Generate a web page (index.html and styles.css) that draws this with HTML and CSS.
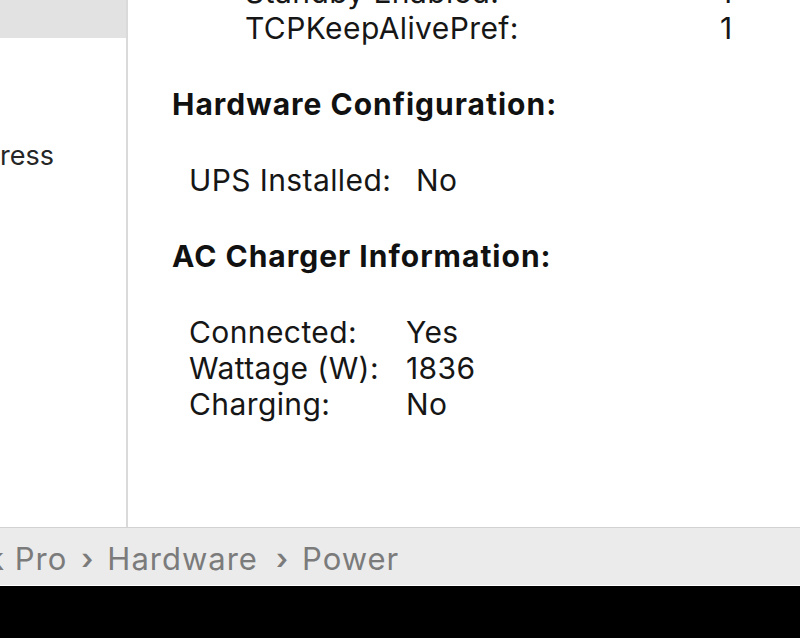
FILE: index.html
```html
<!DOCTYPE html>
<html>
<head>
<meta charset="utf-8">
<link rel="stylesheet" href="styles.css">
</head>
<body>
<div class="window">
  <div class="main">
    <aside class="sidebar">
      <div class="sidebar-selected"></div>
      <div class="sidebar-item">ress</div>
    </aside>
    <div class="divider"></div>
    <section class="content">
      <div class="inner">
        <div class="kv kv-deep">
          <span class="k">Standby Enabled:</span><span class="v">1</span>
          <span class="k">TCPKeepAlivePref:</span><span class="v">1</span>
        </div>
        <h2 class="heading">Hardware Configuration:</h2>
        <div class="kv kv-ups">
          <span class="k">UPS Installed:</span><span class="v">No</span>
        </div>
        <h2 class="heading">AC Charger Information:</h2>
        <div class="kv kv-ac">
          <span class="k">Connected:</span><span class="v">Yes</span>
          <span class="k">Wattage (W):</span><span class="v">1836</span>
          <span class="k">Charging:</span><span class="v">No</span>
        </div>
      </div>
    </section>
  </div>
  <footer class="pathbar">
    <span class="crumb first">k Pro</span>
    <span class="sep">›</span>
    <span class="crumb">Hardware</span>
    <span class="sep sep2">›</span>
    <span class="crumb">Power</span>
  </footer>
</div>
</body>
</html>
```
FILE: styles.css
```css
html, body {
  margin: 0;
  padding: 0;
  background: #000;
}
body {
  width: 800px;
  height: 638px;
  overflow: hidden;
  font-family: Inter, "Noto Sans", sans-serif;
  color: #161616;
}
.window {
  width: 800px;
  height: 586px;
  background: #fff;
  display: flex;
  flex-direction: column;
}
.main {
  height: 527px;
  display: flex;
  overflow: hidden;
}
.sidebar {
  width: 126px;
  flex: none;
  background: #fff;
  overflow: hidden;
}
.sidebar-selected {
  height: 38px;
  background: #e2e2e2;
}
.sidebar-item {
  margin-top: 100px;
  font-size: 27px;
  line-height: 36px;
  color: #262626;
  white-space: nowrap;
}
.divider {
  width: 2px;
  flex: none;
  background: #dadada;
}
.content {
  flex: 1;
  overflow: hidden;
  padding-left: 44px;
  font-size: 30px;
  line-height: 36px;
  letter-spacing: 0.4px;
}
.inner {
  margin-top: -26px;
}
.heading {
  margin: 40px 0 40px 0;
  font-size: 30px;
  line-height: 36px;
  font-weight: 700;
  letter-spacing: 1px;
  color: #111;
}
.kv {
  display: grid;
  white-space: nowrap;
}
.kv-deep {
  padding-left: 73px;
  grid-template-columns: 475px auto;
}
.kv-ups {
  padding-left: 17px;
  grid-template-columns: 227px auto;
}
.kv-ac {
  padding-left: 17px;
  grid-template-columns: 217px auto;
}
.pathbar {
  height: 58px;
  box-sizing: border-box;
  border-top: 1px solid #d2d2d2;
  background: #ebebeb;
  display: flex;
  align-items: center;
  padding-top: 3px;
  font-size: 31px;
  letter-spacing: 1px;
  color: #7b7b7b;
  white-space: nowrap;
  overflow: hidden;
}
.crumb.first {
  margin-left: -13px;
}
.sep {
  margin: 0 14px 0 14px;
  font-size: 29px;
  font-weight: 600;
  letter-spacing: 0;
}
.sep2 {
  margin-left: 18px;
}
```
